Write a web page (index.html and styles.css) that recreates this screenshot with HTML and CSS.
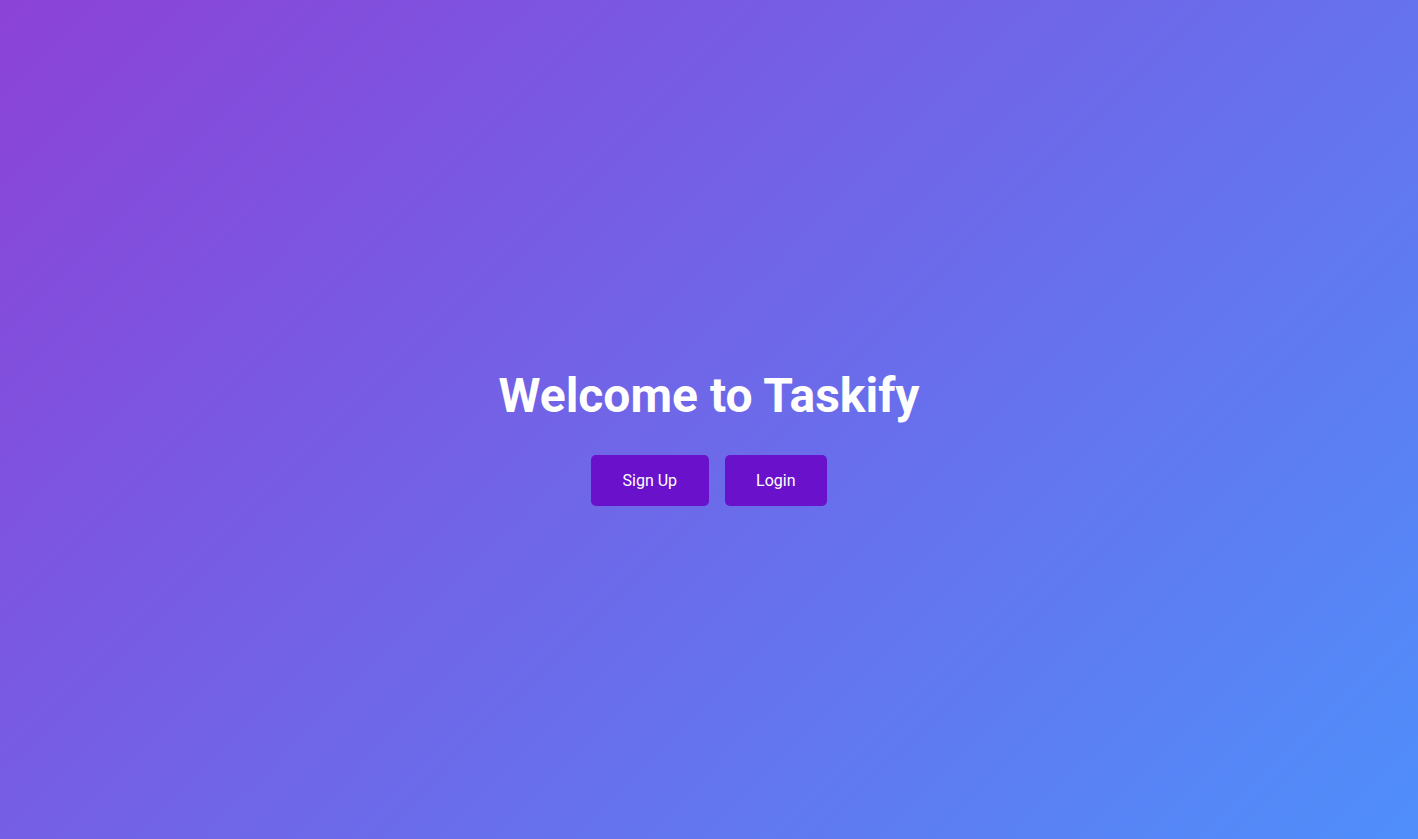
FILE: index.html
```html
<!DOCTYPE html>
<html lang="en">
<head>
<meta charset="utf-8">
<title>Taskify</title>
<link rel="stylesheet" href="styles.css">
</head>
<body>
  <main class="hero">
    <h1 class="hero-title">Welcome to Taskify</h1>
    <div class="hero-actions">
      <button class="btn">Sign Up</button>
      <button class="btn">Login</button>
    </div>
  </main>
</body>
</html>
```

FILE: styles.css
```css
html, body {
  margin: 0;
  height: 100%;
}
body {
  background: linear-gradient(135deg, #8c42d7 0%, #4f8ffb 100%);
  font-family: Roboto, "Liberation Sans", sans-serif;
  color: #fff;
}
.hero {
  height: 100%;
  display: flex;
  flex-direction: column;
  align-items: center;
  justify-content: center;
}
.hero-title {
  font-size: 48px;
  font-weight: 700;
  margin: 35px 0 31px;
  line-height: 56px;
}
.hero-actions {
  display: flex;
  gap: 16px;
}
.btn {
  font-family: Roboto, "Liberation Sans", sans-serif;
  font-size: 16px;
  line-height: 19px;
  color: #fff;
  background: #6a11cb;
  border: none;
  border-radius: 5px;
  padding: 16px 31.5px;
  cursor: pointer;
}
```
